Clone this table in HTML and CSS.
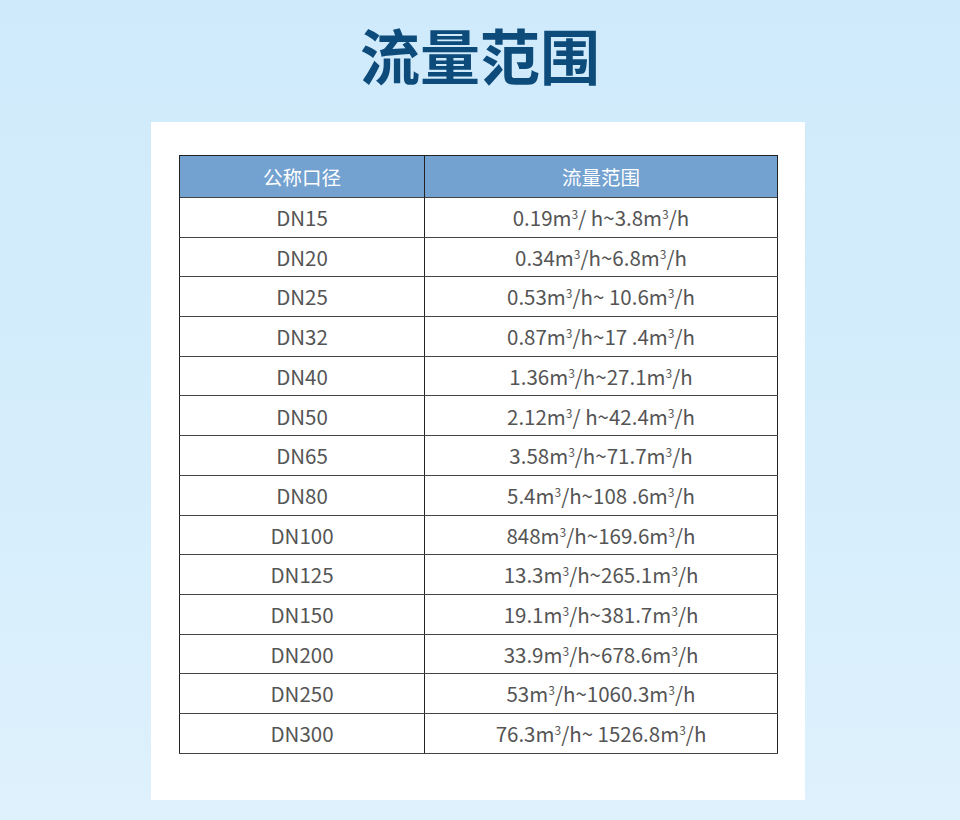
FILE: index.html
```html
<!DOCTYPE html>
<html lang="zh">
<head>
<meta charset="utf-8">
<title>流量范围</title>
<link rel="stylesheet" href="styles.css">
</head>
<body>
<div class="page">
  <h1 class="title">流量范围</h1>
  <div class="card">
    <table class="flow">
      <thead>
        <tr><th class="c1">公称口径</th><th>流量范围</th></tr>
      </thead>
      <tbody>
        <tr><td>DN15</td><td>0.19m<sup>3</sup>/ h~3.8m<sup>3</sup>/h</td></tr>
        <tr><td>DN20</td><td>0.34m<sup>3</sup>/h~6.8m<sup>3</sup>/h</td></tr>
        <tr><td>DN25</td><td>0.53m<sup>3</sup>/h~ 10.6m<sup>3</sup>/h</td></tr>
        <tr><td>DN32</td><td>0.87m<sup>3</sup>/h~17 .4m<sup>3</sup>/h</td></tr>
        <tr><td>DN40</td><td>1.36m<sup>3</sup>/h~27.1m<sup>3</sup>/h</td></tr>
        <tr><td>DN50</td><td>2.12m<sup>3</sup>/ h~42.4m<sup>3</sup>/h</td></tr>
        <tr><td>DN65</td><td>3.58m<sup>3</sup>/h~71.7m<sup>3</sup>/h</td></tr>
        <tr><td>DN80</td><td>5.4m<sup>3</sup>/h~108 .6m<sup>3</sup>/h</td></tr>
        <tr><td>DN100</td><td>848m<sup>3</sup>/h~169.6m<sup>3</sup>/h</td></tr>
        <tr><td>DN125</td><td>13.3m<sup>3</sup>/h~265.1m<sup>3</sup>/h</td></tr>
        <tr><td>DN150</td><td>19.1m<sup>3</sup>/h~381.7m<sup>3</sup>/h</td></tr>
        <tr><td>DN200</td><td>33.9m<sup>3</sup>/h~678.6m<sup>3</sup>/h</td></tr>
        <tr><td>DN250</td><td>53m<sup>3</sup>/h~1060.3m<sup>3</sup>/h</td></tr>
        <tr><td>DN300</td><td>76.3m<sup>3</sup>/h~ 1526.8m<sup>3</sup>/h</td></tr>
      </tbody>
    </table>
  </div>
</div>
</body>
</html>
```
FILE: styles.css
```css
html, body {
  margin: 0;
  padding: 0;
}
body {
  width: 960px;
  height: 820px;
  background: linear-gradient(180deg, #cfeafb 0%, #d6eefc 60%, #def1fc 100%);
  font-family: "Noto Sans CJK SC", "Noto Sans", sans-serif;
  overflow: hidden;
}
.page {
  display: flex;
  flex-direction: column;
}
.title {
  margin: 0;
  height: 122px;
  display: flex;
  align-items: center;
  justify-content: center;
  padding-bottom: 16px;
  box-sizing: border-box;
  font-size: 60px;
  font-weight: 700;
  color: #0d4b7b;
  letter-spacing: 0;
}
.card {
  margin-left: 151px;
  width: 654px;
  height: 678px;
  background: #ffffff;
  box-sizing: border-box;
  padding: 33px 0 0 28px;
}
.flow {
  width: 599px;
  border-collapse: collapse;
  border: 1px solid #222;
  color: #555555;
  font-size: 20.5px;
  text-align: center;
}
.flow th {
  height: 41px;
  padding: 0;
  background: #73a1d0;
  color: #ffffff;
  font-weight: 400;
  font-size: 19.5px;
  border-right: 1px solid #222;
}
.flow th.c1 {
  width: 244px;
}
.flow td {
  height: 38.7px;
  padding: 0;
  border: 1px solid #444;
  border-left: 1px solid #222;
  border-right: 1px solid #222;
  line-height: 1;
}
.flow sup {
  font-size: 12px;
  vertical-align: 7px;
  line-height: 0;
}
```
